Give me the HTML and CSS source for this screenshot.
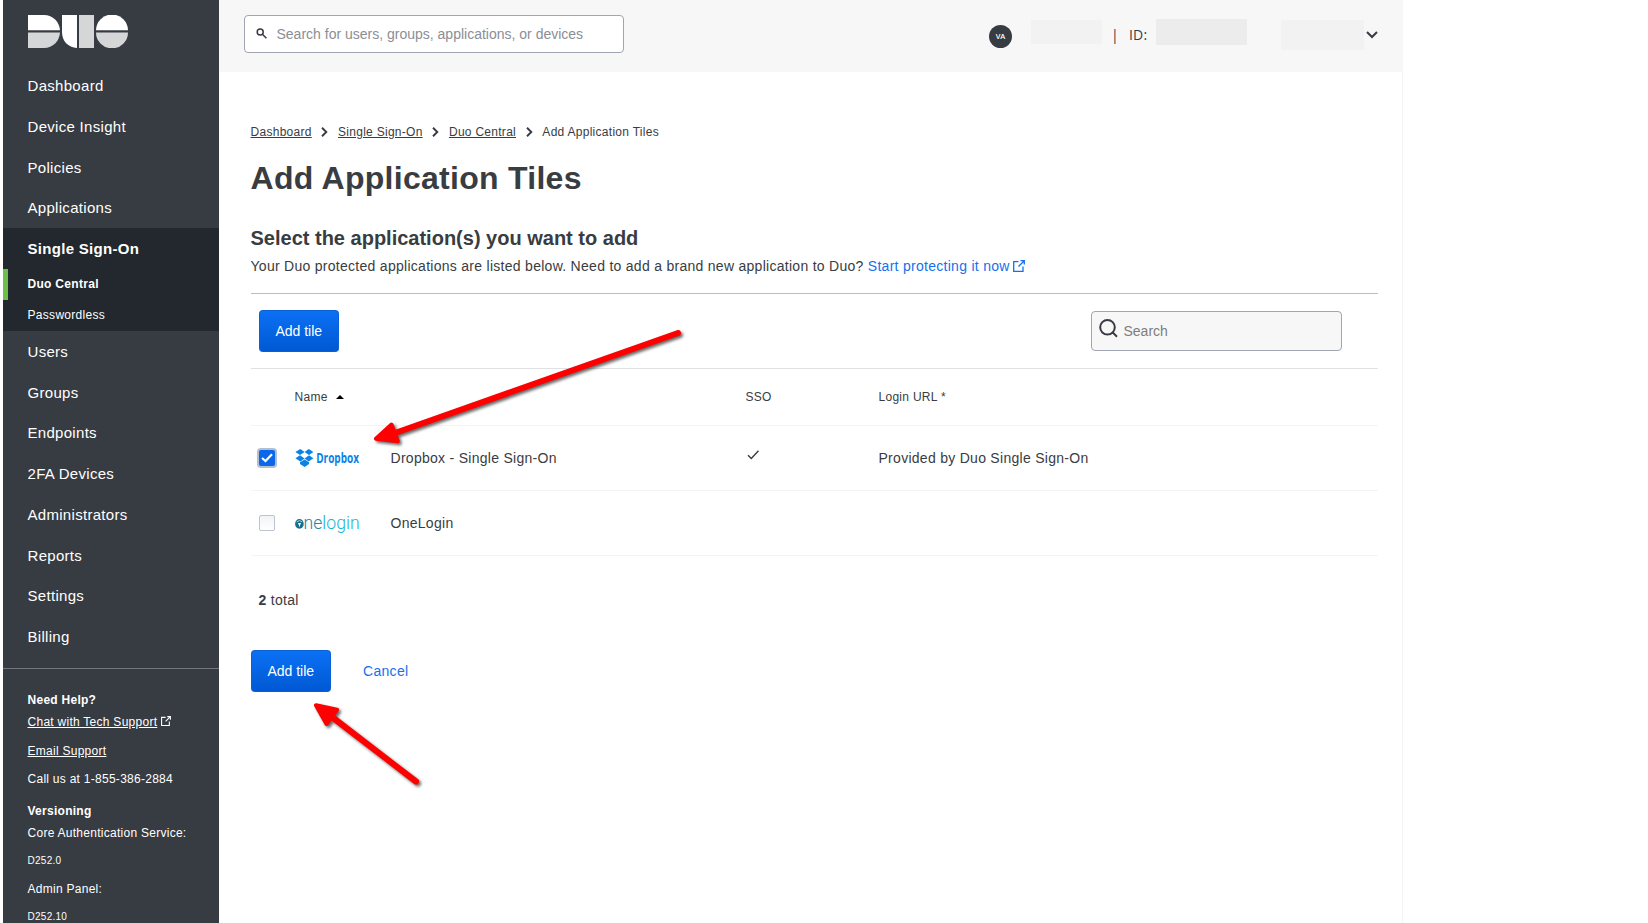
FILE: index.html
```html
<!DOCTYPE html>
<html lang="en">
<head>
<meta charset="utf-8">
<title>Add Application Tiles</title>
<link rel="stylesheet" href="styles.css">
</head>
<body>
<div class="app">
  <aside class="sidebar">
    <svg class="logo" width="101" height="33" viewBox="0 0 101 33">
      <g fill="#fff"><path d="M0 0H16C25 0 31.500 7 32 15.300H0Z"/><path d="M34 0H49V33C40 32.500 34 26 34 17Z"/><path d="M68 15.300A16 15.800 0 0 1 100 15.300Z"/></g>
      <g fill="#d5d6d8"><path d="M0 17.500H32C31.500 26 25 33 16 33H0Z"/><path d="M51 0H66V33H51Z"/><path d="M68 17.500H100A16 15.800 0 0 1 68 17.500Z"/></g>
    </svg>
    <nav class="nav">
      <a class="nav-item">Dashboard</a>
      <a class="nav-item">Device Insight</a>
      <a class="nav-item">Policies</a>
      <a class="nav-item">Applications</a>
      <div class="nav-group">
        <a class="nav-item nav-item-on">Single Sign-On</a>
        <a class="sub-item sub-item-on">Duo Central</a>
        <a class="sub-item">Passwordless</a>
      </div>
      <a class="nav-item">Users</a>
      <a class="nav-item">Groups</a>
      <a class="nav-item">Endpoints</a>
      <a class="nav-item">2FA Devices</a>
      <a class="nav-item">Administrators</a>
      <a class="nav-item">Reports</a>
      <a class="nav-item">Settings</a>
      <a class="nav-item">Billing</a>
    </nav>
    <div class="help">
      <b class="help-title">Need Help?</b>
      <div class="help-chat"><a class="underlined">Chat with Tech Support</a><svg width="10" height="10" viewBox="0 0 12 12" fill="none" stroke="#fff" stroke-width="1.300"><path d="M5.500 1.600H.7V11.300H10V6.500M7.500.7H11.300V4.500M11.300.7L5.500 6.500"/></svg></div>
      <div class="help-email"><a class="underlined">Email Support</a></div>
      <div class="help-call">Call us at 1-855-386-2884</div>
      <b class="help-title">Versioning</b>
      <div class="help-label">Core Authentication Service:</div>
      <div class="help-version">D252.0</div>
      <div class="help-label">Admin Panel:</div>
      <div class="help-version">D252.10</div>
    </div>
  </aside>
  <div class="page">
    <header class="topbar">
      <div class="search search-global">
        <svg width="11" height="11" viewBox="0 0 11 11" fill="none" stroke="#373b42" stroke-width="1.500"><circle cx="4.200" cy="4" r="3"/><path d="M6.400 6.200L10.400 10.200"/></svg>
        <span>Search for users, groups, applications, or devices</span>
      </div>
      <div class="account">
        <span class="avatar">VA</span>
        <span class="mask mask-name"></span>
        <span class="bar">|</span>
        <span class="account-id">ID:</span>
        <span class="mask mask-id"></span>
        <span class="mask mask-user"></span>
        <svg class="caret" width="12" height="8" viewBox="0 0 12 8" fill="none" stroke="#373b42" stroke-width="2"><path d="M1 1L6 6L11 1"/></svg>
      </div>
    </header>
    <main class="content">
      <div class="crumbs">
        <a class="underlined">Dashboard</a>
        <svg class="chev" width="7" height="10" viewBox="0 0 7 10"><path d="M1 .8L5.300 5L1 9.200"/></svg>
        <a class="underlined">Single Sign-On</a>
        <svg class="chev" width="7" height="10" viewBox="0 0 7 10"><path d="M1 .8L5.300 5L1 9.200"/></svg>
        <a class="underlined">Duo Central</a>
        <svg class="chev" width="7" height="10" viewBox="0 0 7 10"><path d="M1 .8L5.300 5L1 9.200"/></svg>
        <span>Add Application Tiles</span>
      </div>
      <h1 class="title">Add Application Tiles</h1>
      <h2 class="subtitle">Select the application(s) you want to add</h2>
      <p class="intro">Your Duo protected applications are listed below. Need to add a brand new application to Duo? <a class="link">Start protecting it now</a><svg width="12" height="12" viewBox="0 0 12 12" fill="none" stroke="#1670ee" stroke-width="1.300"><path d="M5.500 1.600H.7V11.300H10V6.500M7.500.7H11.300V4.500M11.300.7L5.500 6.500"/></svg></p>
      <div class="toolbar">
        <button class="btn">Add tile</button>
        <div class="search search-table">
          <svg width="20" height="20" viewBox="0 0 20 20" fill="none" stroke="#373b42" stroke-width="2"><circle cx="8.500" cy="8.300" r="7.300"/><path d="M13.500 13.300L18 17.800"/></svg>
          <span>Search</span>
        </div>
      </div>
      <div class="row head">
        <span></span>
        <span class="sort">Name <svg width="8" height="4" viewBox="0 0 8 4"><path d="M4 0L8 4H0Z"/></svg></span>
        <span></span>
        <span>SSO</span>
        <span>Login URL *</span>
      </div>
      <div class="row">
        <span class="check check-on"><svg width="16" height="16" viewBox="0 0 16 16" fill="none" stroke="#fff" stroke-width="2.200"><path d="M3 8L6.500 11L13 4.200"/></svg></span>
        <svg class="brand" width="68" height="28" viewBox="0 -3 68 28">
          <g fill="#0a82e6"><path d="M5.300 2L9.600 5L5 8.100L.4 4.900ZM13.700 2L18.400 4.900L14 8.100L9.600 5ZM5 8.200L9.600 11.400L5.300 14.400L.4 11.200ZM14 8.200L18.400 11.200L13.700 14.400L9.600 11.400ZM9.600 12.400L14 15.300V17L9.600 20.100L5 17V15.300Z"/></g>
          <text class="dropbox-word" x="21.200" y="16.200" textLength="42.800" lengthAdjust="spacingAndGlyphs">Dropbox</text>
        </svg>
        <span>Dropbox - Single Sign-On</span>
        <svg class="tick" width="13" height="10" viewBox="0 0 13 10" fill="none" stroke="#373b42" stroke-width="1.400"><path d="M1 5.200L4.300 8.500L11.500.8"/></svg>
        <span>Provided by Duo Single Sign-On</span>
      </div>
      <div class="row">
        <span class="check"></span>
        <svg class="brand" width="68" height="28" viewBox="0 -3 68 28">
          <defs><linearGradient id="one" gradientUnits="userSpaceOnUse" x1="9" y1="0" x2="65" y2="0"><stop offset="0" stop-color="#1c7c9c"/><stop offset=".3" stop-color="#258ba6"/><stop offset=".38" stop-color="#20b2cd"/><stop offset="1" stop-color="#20b2cd"/></linearGradient></defs>
          <ellipse cx="4.400" cy="11.900" rx="4.300" ry="4.900" fill="#14708f"/>
          <path d="M1.700 9.900Q4.400 7.100 7.100 9.900" stroke="#a8d3df" stroke-width="1" fill="none"/>
          <path d="M3.200 10.900H5.800V12.500H5V14.500H4V12.500H3.200Z" fill="#fff"/>
          <text class="onelogin-word" x="8.600" y="16.800" textLength="56" lengthAdjust="spacingAndGlyphs" fill="url(#one)">nelogin</text>
        </svg>
        <span>OneLogin</span>
        <span></span>
        <span></span>
      </div>
      <p class="total"><b>2</b> total</p>
      <div class="actions">
        <button class="btn">Add tile</button>
        <a class="link">Cancel</a>
      </div>
    </main>
  </div>
</div>
<svg class="arrows" width="1648" height="923" viewBox="0 0 1648 923">
  <g fill="#f00" stroke="#f00" stroke-linecap="round" stroke-linejoin="round">
    <path stroke-width="6" d="M678 333L395 433"/>
    <path stroke-width="4" d="M375.900 438.700L391.500 424.500L397.800 441.300Z"/>
    <path stroke-width="6" d="M416 781.500L332 717"/>
    <path stroke-width="4" d="M316 705.300L337 709.800L326.500 724Z"/>
  </g>
</svg>
</body>
</html>
```

FILE: styles.css
```css
* { box-sizing: border-box; }
body {
  margin: 0;
  background: #fff;
  color: #393c41;
  font: 14px/20px "Liberation Sans", Arial, sans-serif;
  letter-spacing: 0.28px;
  overflow: hidden;
}
.app { display: flex; height: 923px; overflow: hidden; padding-left: 3px; }
.sidebar { width: 216px; flex: none; background: #373b42; color: #fff; overflow: hidden; }
.logo { display: block; margin: 15px 0 17.250px 25px; }
.nav { border-bottom: 1px solid #73777d; padding-bottom: 11px; letter-spacing: 0.3px; }
.nav-item { display: block; height: 40.710px; line-height: 41px; padding-left: 24.500px; font-size: 15px; }
.nav-item-on { font-weight: bold; }
.nav-group { background: #23282e; height: 103px; }
.sub-item { display: block; height: 31px; line-height: 31px; padding-left: 24.500px; font-size: 12px; }
.sub-item-on { font-weight: bold; border-left: 5px solid #6cc04a; padding-left: 19.500px; }
.help { padding: 20px 0 0 24.500px; font-size: 12px; letter-spacing: 0.27px; }
.help div, .help-title { display: block; height: 22px; line-height: 22px; white-space: nowrap; }
.help .help-email { height: 35px; line-height: 36px; }
.help .help-call { height: 32px; line-height: 22px; }
.help .help-version { height: 32px; line-height: 30px; font-size: 10px; }
.help .help-label { height: 24px; }
.help-chat svg { margin-left: 3.500px; }
.underlined { text-decoration: underline; }
.page { width: 1184px; flex: none; border-right: 1px solid #f5f5f5; }
.topbar { width: 1184px; height: 72px; background: #f7f7f7; display: flex; align-items: flex-start; justify-content: space-between; padding: 15px 25px 0; }
.search { display: flex; border: 1px solid #a0a5b1; border-radius: 4px; letter-spacing: 0; color: #8b8e95; }
.search-global { width: 380px; height: 38px; background: #fff; padding: 12px 0 0 11px; gap: 9.500px; }
.search-global span { line-height: 12px; }
.account { display: flex; align-items: flex-start; letter-spacing: 0; }
.avatar { width: 23px; height: 23px; margin-top: 9.500px; border-radius: 50%; background: #373b42; color: #fff; font: 600 7.500px/23px "Open Sans", sans-serif; text-align: center; }
.mask { background: #f2f2f2; }
.mask-name { width: 71px; height: 24px; margin: 5px 9px 0 19px; }
.bar { margin-top: 10px; width: 18px; font-family: "Open Sans", sans-serif; }
.account-id { margin-top: 10px; width: 27px; font-family: "Open Sans", sans-serif; letter-spacing: 0.2px; }
.mask-id { width: 91px; height: 26px; margin: 4px 34px 0 0; background: #ececec; }
.mask-user { width: 83px; height: 30px; margin-top: 5px; }
.caret { margin: 16px 0 0 2px; }
.content { padding: 50px 24px 0 31.500px; }
.crumbs { display: flex; align-items: center; height: 20px; font-size: 12px; }
.chev { margin: 0 9.600px 0 9.700px; fill: none; stroke: #373b42; stroke-width: 1.900; }
.title { margin: 16px 0 0; font-size: 32px; line-height: 40px; }
.subtitle { margin: 28px 0 0; font-size: 20px; line-height: 24px; letter-spacing: 0; }
.intro { margin: 6px 0 0; height: 38px; border-bottom: 1px solid #b9bcc2; line-height: 20px; }
.intro svg { margin-left: 3.500px; vertical-align: -1px; }
.link { color: #1670ee; }
.toolbar { display: flex; justify-content: space-between; height: 75px; padding: 16px 36px 0 8px; border-bottom: 1px solid #dfe1e5; }
.btn { width: 80px; height: 42px; border: 1px solid #0a60d6; border-bottom-color: #0560dc; border-radius: 4px; background: linear-gradient(#0b70f5, #0059d3); color: #fff; font: 14px "Liberation Sans", Arial, sans-serif; padding: 0 0 0 0.500px; }
.search-table { width: 251px; height: 40px; margin-top: 1px; background: #f7f7f7; padding: 7px 0 0 6.500px; gap: 5px; color: #7d7d7d; }
.search-table span { line-height: 24px; }
.row { display: grid; grid-template-columns: 36px 96px 355px 133px 1fr; align-items: center; height: 65px; border-bottom: 1px solid #f3f4f5; padding-left: 8px; }
.head { height: 57px; font-size: 12px; }
.sort { display: flex; align-items: center; gap: 8px; }
.row > svg { display: block; }
.brand { overflow: visible; }
.check { width: 16px; height: 16px; border: 1px solid #bac4d2; border-radius: 2px; background: linear-gradient(#f1f3f6, #fff); }
.check-on { border: 0; background: #0c68ea; box-shadow: 0 0 0 2px #b1bfd0; }
.check-on svg { display: block; }
.tick { margin: -6px 0 0 1px; }
.dropbox-word { font: bold 14.500px "Open Sans", sans-serif; fill: #0a82e6; letter-spacing: 0; }
.onelogin-word { font: 300 19px Roboto, sans-serif; letter-spacing: 0; }
.total { margin: 34px 0 0 8px; }
.actions { display: flex; align-items: center; gap: 32.600px; margin-top: 40px; }
.arrows { position: absolute; left: 0; top: 0; pointer-events: none; filter: drop-shadow(2px 2px 1.500px rgba(0, 0, 0, 0.6)); }
```
